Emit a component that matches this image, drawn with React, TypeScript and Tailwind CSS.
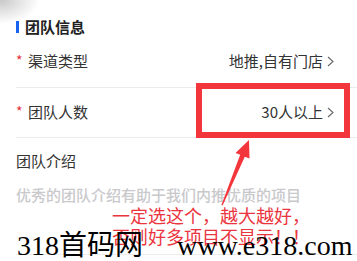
const Chevron = () => (
  <svg width="7" height="11" viewBox="0 0 7 11" className="ml-[4px]">
    <polyline points="1,1 6,5.5 1,10" fill="none" stroke="#666" strokeWidth="1.1" />
  </svg>
);

const Row = ({ label, value, h }: { label: string; value: string; h: string }) => (
  <div className={`flex items-center justify-between border-b border-[#ececec] pr-[23px] ${h}`}>
    <div className="flex items-center">
      <span className="text-[14px] text-[#e8333b] w-[12px] -mt-[4px] leading-none">*</span>
      <span className="text-[15px] text-[#333]">{label}</span>
    </div>
    <div className="flex items-center text-[15px] text-[#333]">
      {value}
      <Chevron />
    </div>
  </div>
);

const App = () => {
  return (
    <div className="relative w-[357px] h-[261px] overflow-hidden bg-white font-['Noto_Sans_CJK_SC',sans-serif]">
      <div className="absolute top-0 left-0 w-[40px] h-[24px] bg-[radial-gradient(ellipse_at_0_0,#c8c8c8,transparent_70%)]"></div>

      <div className="pt-[18px] pl-4">
        <div className="flex items-center h-[18px] gap-[6px]">
          <span className="w-[3px] h-[12px] bg-[#1763f0]"></span>
          <span className="text-[15px] font-bold text-[#222]">团队信息</span>
        </div>

        <Row label="渠道类型" value="地推,自有门店" h="h-[52px]" />
        <Row label="团队人数" value="30人以上" h="h-[50px]" />

        <div className="h-[46px] flex items-center text-[15px] text-[#333]">团队介绍</div>
        <div className="h-[71px] border-b border-[#ececec]">
          <p className="text-[15px] leading-[22px] font-medium text-[#c9c9cc]">
            优秀的团队介绍有助于我们内推优质的项目
          </p>
        </div>
      </div>

      {/* annotation */}
      <div className="absolute left-[196px] top-[83px] w-[154px] h-[55px] border-[6px] border-[#f2363c]"></div>
      <svg className="absolute inset-0 pointer-events-none" width="357" height="261">
        <polygon
          points="249,140 249.5,158.5 244.8,156.7 222.6,205.4 221.4,205 240.2,154.7 235.5,153"
          fill="#f2363c"
        />
      </svg>
      <div className="absolute left-[112px] top-[205px] text-[18px] leading-[21px] text-[#ea3540]">
        <p>一定选这个，越大越好，</p>
        <p>否则好多项目不显示！！</p>
      </div>

      {/* watermark */}
      <div className="absolute left-[17px] top-[232px] flex text-[28px] leading-[28px] text-black font-['Liberation_Serif','Noto_Sans_CJK_SC',serif] whitespace-nowrap">
        <span className="w-[160px]">318首码网</span>
        <span>www.e318.com</span>
      </div>
    </div>
  );
};

export default App;
